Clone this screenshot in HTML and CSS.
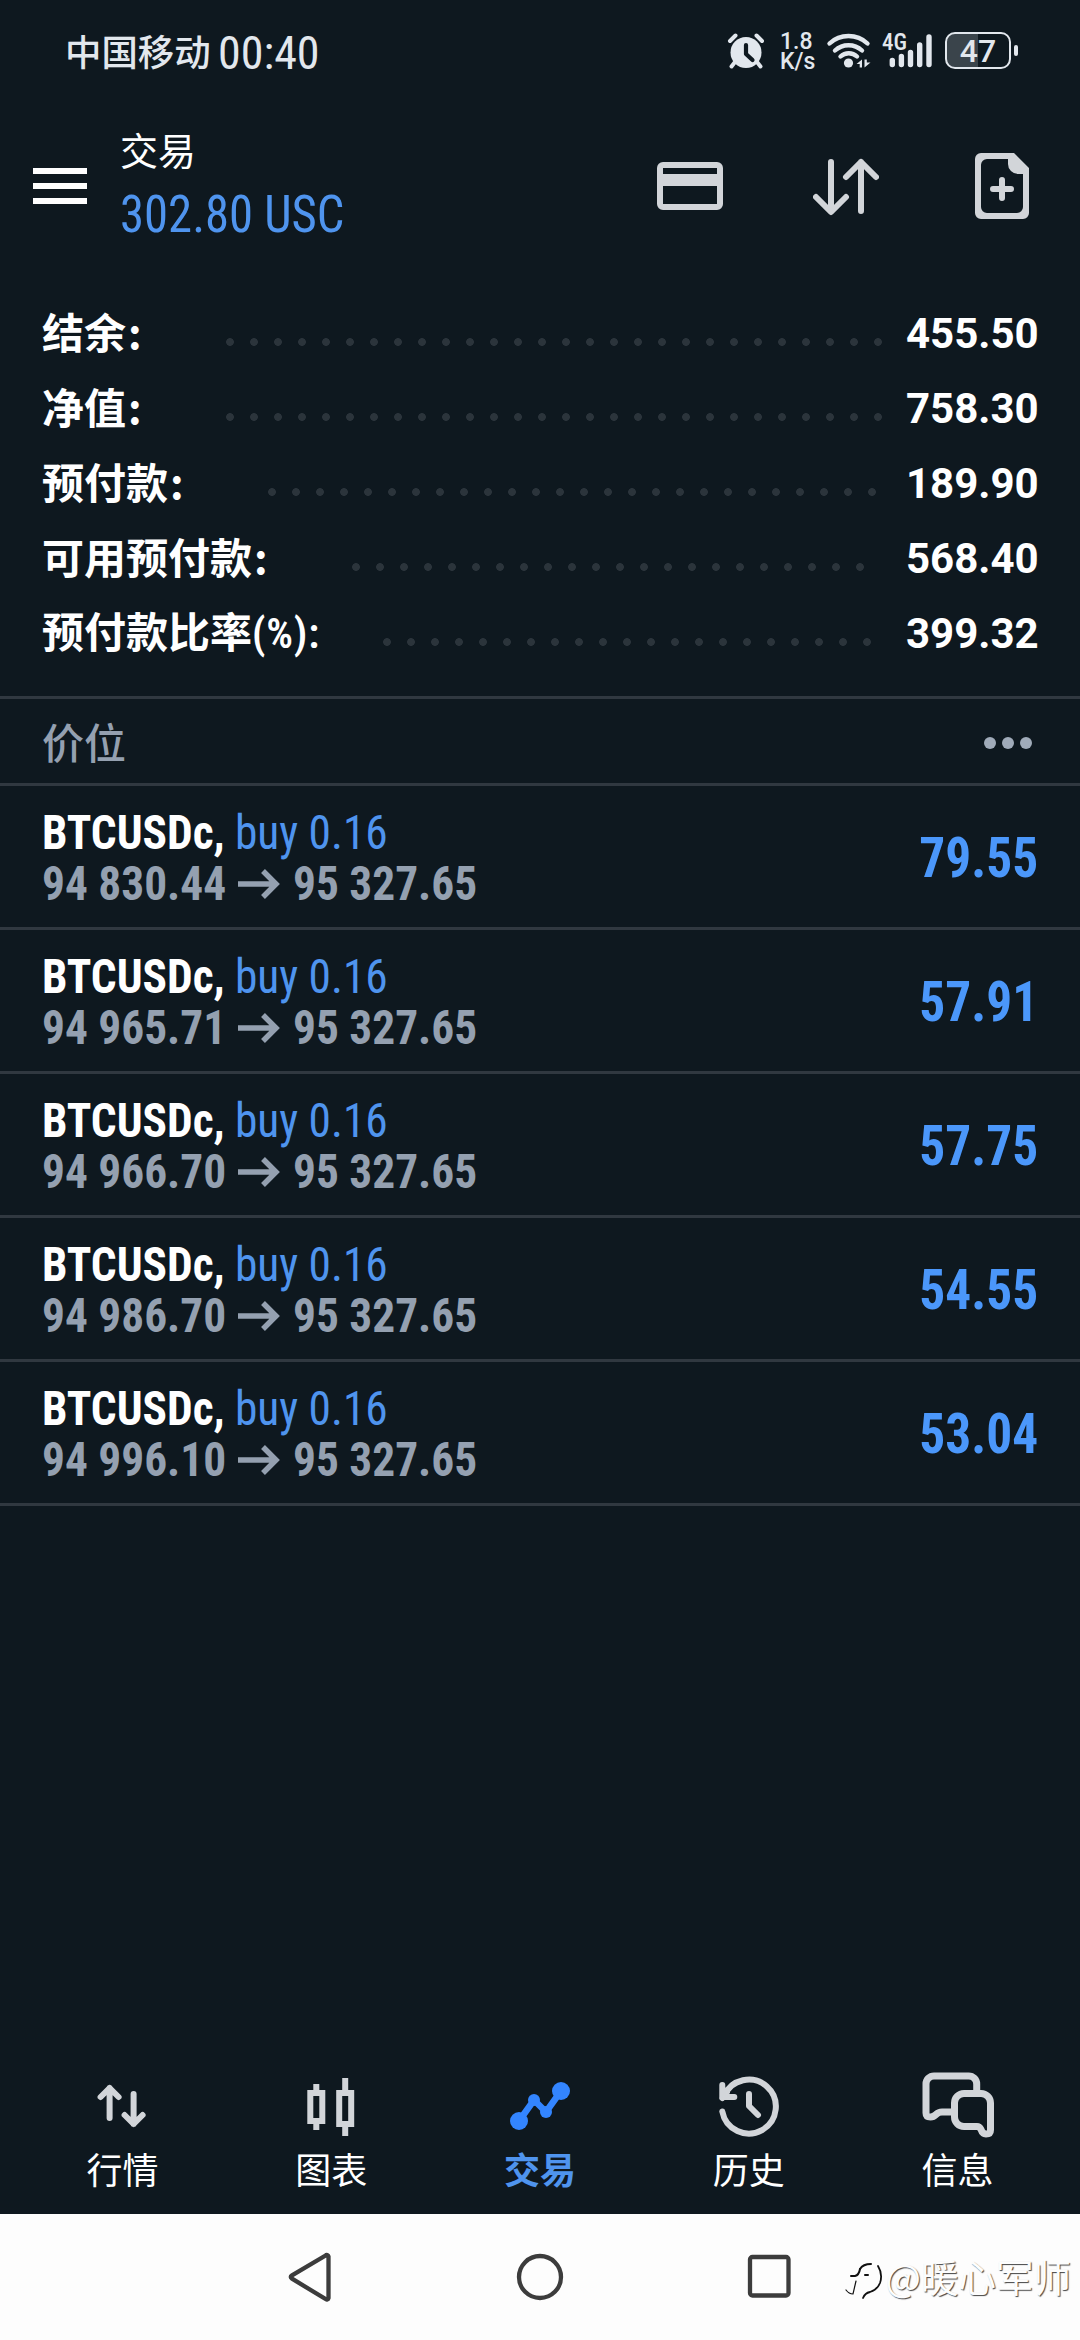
FILE: index.html
```html
<!DOCTYPE html>
<html lang="zh-CN">
<head>
<meta charset="utf-8">
<title>交易</title>
<link rel="stylesheet" href="styles.css">
</head>
<body>
<div class="screen">
  <header class="status">
    <span class="carrier">中国移动</span>
    <span class="clock">00:40</span>
    <div class="status-icons">
      <svg class="alarm" width="38" height="38" viewBox="0 0 38 38">
        <path d="M8 30l-3.500 4.500M30 30l3.500 4.500M3 9l5.500-5.500M35 9l-5.500-5.500" stroke="currentColor" stroke-width="4" stroke-linecap="round"/>
        <circle cx="19" cy="20.500" r="15.500" fill="currentColor"/>
        <path d="M19 13v9l6.500 6" fill="none" stroke="#0e181f" stroke-width="4.200" stroke-linecap="round" stroke-linejoin="round"/>
      </svg>
      <div class="speed"><span>1.8</span><span>K/s</span></div>
      <svg class="wifi" width="46" height="38" viewBox="0 0 46 38">
        <g fill="none" stroke="currentColor" stroke-width="4.400" stroke-linecap="round">
          <path d="M3.500 11.500a28 28 0 0 1 38 0"/>
          <path d="M9 18.500a20 20 0 0 1 27 0"/>
          <path d="M14.500 24.500a12 12 0 0 1 16.500 0"/>
        </g>
        <circle cx="22.500" cy="31" r="4.600" fill="currentColor"/>
        <path d="M30.500 32l5.500-4.500v8h-2.300v-3.500zM44.500 30.500L38.500 35.500v-8h2.300v3z" fill="currentColor"/>
      </svg>
      <div class="cell">
        <span class="gen">4G</span>
        <svg width="46" height="38" viewBox="0 0 46 38">
          <path d="M6.300 28.500v4M15.400 24.500v8M24.500 20.500v12M33.700 13v19.500M43 5v27.500" stroke="currentColor" stroke-width="5.400" stroke-linecap="round"/>
        </svg>
      </div>
      <div class="battery"><span>47</span></div>
      <i class="battery-tip"></i>
    </div>
  </header>

  <div class="topbar">
    <div class="menu"><i></i><i></i><i></i></div>
    <div class="title">
      <span class="title-name">交易</span>
      <span class="title-profit">302.80 USC</span>
    </div>
    <div class="actions">
      <svg width="66" height="66" viewBox="0 0 66 66">
        <rect x="3" y="12" width="60" height="42" rx="3" fill="none" stroke="currentColor" stroke-width="6"/>
        <path d="M3 27h60" stroke="currentColor" stroke-width="12"/>
      </svg>
      <svg width="66" height="66" viewBox="0 0 66 66" fill="none" stroke="currentColor" stroke-width="6" stroke-linecap="round" stroke-linejoin="round">
        <path d="M18 9v49M3 44l15 15 15-15M48 58V9M33 24L48 9l15 15"/>
      </svg>
      <svg width="54" height="66" viewBox="0 0 54 66">
        <path fill="currentColor" fill-rule="evenodd" d="M6 0H39L54 15V60a6 6 0 0 1-6 6H6a6 6 0 0 1-6-6V6a6 6 0 0 1 6-6zM12 6a6 6 0 0 0-6 6V54a6 6 0 0 0 6 6H42a6 6 0 0 0 6-6V21H43a10 10 0 0 1-10-10V6z"/>
        <path d="M18 36h18M27 27v18" stroke="currentColor" stroke-width="6" stroke-linecap="round"/>
      </svg>
    </div>
  </div>

  <section class="summary">
    <div class="sum-row"><span class="sum-label">结余<em>:</em></span><i class="leader" style="width:672px;margin-right:16px"></i><span class="sum-value">455.50</span></div>
    <div class="sum-row"><span class="sum-label">净值<em>:</em></span><i class="leader" style="width:672px;margin-right:16px"></i><span class="sum-value">758.30</span></div>
    <div class="sum-row"><span class="sum-label">预付款<em>:</em></span><i class="leader" style="width:624px;margin-right:22px"></i><span class="sum-value">189.90</span></div>
    <div class="sum-row"><span class="sum-label">可用预付款<em>:</em></span><i class="leader" style="width:528px;margin-right:34px"></i><span class="sum-value">568.40</span></div>
    <div class="sum-row"><span class="sum-label ratio">预付款比率<b>(%):</b></span><i class="leader" style="width:504px;margin-right:27px"></i><span class="sum-value">399.32</span></div>
  </section>

  <div class="section-head">
    <span>价位</span>
    <div class="more"><i></i><i></i><i></i></div>
  </div>

  <main class="positions">
    <article class="pos">
      <div class="pos-info">
        <div class="pos-line"><span class="sym">BTCUSDc,</span><span class="side">buy 0.16</span></div>
        <div class="pos-line price"><span>94 830.44</span><svg class="arrow" viewBox="0 0 42 30"><path d="M0 15h38M25 2l13 13-13 13"/></svg><span>95 327.65</span></div>
      </div>
      <span class="profit">79.55</span>
    </article>
    <article class="pos">
      <div class="pos-info">
        <div class="pos-line"><span class="sym">BTCUSDc,</span><span class="side">buy 0.16</span></div>
        <div class="pos-line price"><span>94 965.71</span><svg class="arrow" viewBox="0 0 42 30"><path d="M0 15h38M25 2l13 13-13 13"/></svg><span>95 327.65</span></div>
      </div>
      <span class="profit">57.91</span>
    </article>
    <article class="pos">
      <div class="pos-info">
        <div class="pos-line"><span class="sym">BTCUSDc,</span><span class="side">buy 0.16</span></div>
        <div class="pos-line price"><span>94 966.70</span><svg class="arrow" viewBox="0 0 42 30"><path d="M0 15h38M25 2l13 13-13 13"/></svg><span>95 327.65</span></div>
      </div>
      <span class="profit">57.75</span>
    </article>
    <article class="pos">
      <div class="pos-info">
        <div class="pos-line"><span class="sym">BTCUSDc,</span><span class="side">buy 0.16</span></div>
        <div class="pos-line price"><span>94 986.70</span><svg class="arrow" viewBox="0 0 42 30"><path d="M0 15h38M25 2l13 13-13 13"/></svg><span>95 327.65</span></div>
      </div>
      <span class="profit">54.55</span>
    </article>
    <article class="pos">
      <div class="pos-info">
        <div class="pos-line"><span class="sym">BTCUSDc,</span><span class="side">buy 0.16</span></div>
        <div class="pos-line price"><span>94 996.10</span><svg class="arrow" viewBox="0 0 42 30"><path d="M0 15h38M25 2l13 13-13 13"/></svg><span>95 327.65</span></div>
      </div>
      <span class="profit">53.04</span>
    </article>
  </main>

  <nav class="tabs">
    <a class="tab">
      <svg viewBox="0 0 72 72" fill="none" stroke="currentColor" stroke-width="6" stroke-linecap="round" stroke-linejoin="round">
        <path d="M23.600 48V18M14.600 27l9-9 9 9M47.600 24v30M38.600 45l9 9 9-9"/>
      </svg>
      <span>行情</span>
    </a>
    <a class="tab">
      <svg viewBox="0 0 72 72" fill="none" stroke="currentColor" stroke-width="6">
        <path d="M15.300 23h12v28h-12zM21.300 14v7M21.300 53v7M44.200 23h12v31h-12zM50.200 8v13M50.200 56v10"/>
      </svg>
      <span>图表</span>
    </a>
    <a class="tab active">
      <svg viewBox="0 0 72 72" fill="currentColor">
        <path d="M15 51L30 30 42 42 57 21" fill="none" stroke="currentColor" stroke-width="6.500"/>
        <circle cx="15" cy="51" r="9"/><circle cx="30" cy="30" r="6"/><circle cx="42" cy="42" r="6"/><circle cx="57" cy="21" r="9"/>
      </svg>
      <span>交易</span>
    </a>
    <a class="tab">
      <svg viewBox="0 0 72 72" fill="none" stroke="currentColor" stroke-width="6" stroke-linecap="round" stroke-linejoin="round">
        <path d="M9.300 41.500A27 27 0 1 0 11 26L9.300 28M9.300 15v12h12M14 22l-3 4M36 24v12l9 9"/>
      </svg>
      <span>历史</span>
    </a>
    <a class="tab">
      <svg viewBox="0 0 72 72" fill="none" stroke="currentColor" stroke-width="7" stroke-linejoin="round">
        <path d="M54.700 24V14a8 8 0 0 0-8-8H12a8 8 0 0 0-8 8V43q0 4 4.500 4 3 0 5.500-2.500 2.500-2.500 6-2.500H32"/>
        <path d="M42 23.500H59a9.500 9.500 0 0 1 9.500 9.500V60q0 4-4.500 4-3.500 0-5-4.500-1.500-3-4-3H42a9.500 9.500 0 0 1-9.500-9.500V33a9.500 9.500 0 0 1 9.500-9.500z"/>
      </svg>
      <span>信息</span>
    </a>
  </nav>

  <footer class="sysbar">
    <span class="key"><svg viewBox="0 0 50 50"><path d="M43.500 4.500a1.800 1.800 0 0 0-3-1L7 23.300q-2.500 1.700 0 3.400l33.500 20.300a1.800 1.800 0 0 0 3-1z"/></svg></span>
    <span class="key"><svg viewBox="0 0 50 50"><circle cx="25" cy="25" r="21"/></svg></span>
    <span class="key"><svg viewBox="0 0 50 50"><rect x="5" y="5" width="38.500" height="38.500" rx="2.500"/></svg></span>
    <div class="watermark">
      <svg width="38" height="40" viewBox="0 0 38 40" fill="none" stroke="#111" stroke-linecap="round">
        <path d="M15 7q3-5 11-5" stroke-width="2"/>
        <path d="M33 4q5 8 2 17-3 7-10 9-5 1-7 6" stroke-width="1.800"/>
        <path d="M6 14h4q4-1 5-7M20 13h3" stroke-width="2"/>
        <path d="M11 19L8 32Q4 32 1 28" stroke-width="1.200"/>
      </svg>
      <span>@暖心军师</span>
    </div>
  </footer>
</div>
</body>
</html>
```
FILE: styles.css
```css
* { box-sizing: border-box; }

body {
  margin: 0;
  background: #0e181f;
  color: #fff;
  font-family: Roboto, "Noto Sans CJK SC", sans-serif;
}

i { display: block; }
svg { display: block; flex: none; }

.screen {
  display: flex;
  flex-direction: column;
  width: 1080px;
  height: 2340px;
  overflow: hidden;
}

/* status bar */
.status {
  display: flex;
  height: 104px;
  padding: 32px 62px 0 65px;
  color: #e2e7ed;
}
.carrier {
  width: 153px;
  font: 500 36.4px/36px "Noto Sans CJK SC", sans-serif;
}
.clock {
  font-size: 46px;
  font-weight: 450;
  line-height: 42px;
  font-stretch: 84%;
}
.status-icons {
  display: flex;
  margin-left: auto;
}
.speed {
  display: flex;
  flex-direction: column;
  width: 34px;
  margin: 0 12px 0 15px;
  font-size: 23px;
  line-height: 20px;
  font-weight: 500;
  font-stretch: 90%;
}
.cell { position: relative; margin: 0 13px 0 14px; }
.gen {
  position: absolute;
  left: -4px;
  top: 1px;
  font-size: 23px;
  line-height: 20px;
  font-weight: 500;
  font-stretch: 75%;
}
.battery {
  display: flex;
  align-items: center;
  justify-content: center;
  width: 66px;
  height: 37px;
  border: 2px solid currentColor;
  border-radius: 10px;
  background: linear-gradient(90deg, #3a444b 50%, transparent 50%);
  font-size: 32px;
  font-weight: 500;
  font-stretch: 90%;
}
.battery-tip {
  width: 4px;
  height: 11px;
  margin: 13px 0 0 3px;
  border-radius: 2px;
  background: currentColor;
}

/* title bar */
.topbar {
  display: flex;
  height: 192px;
  padding: 0 51px 0 33px;
}
.menu {
  display: flex;
  flex-direction: column;
  gap: 9px;
  width: 54px;
  padding-top: 64px;
}
.menu i { height: 6px; background: #fff; }
.title {
  display: flex;
  flex-direction: column;
  margin-left: 33px;
  padding-top: 22px;
}
.title-name {
  font: 38px/46px "Noto Sans CJK SC", sans-serif;
}
.title-profit {
  margin-top: 13px;
  color: #4f94ee;
  font-size: 51px;
  line-height: 60px;
  font-stretch: 75%;
  transform: scaleX(0.955);
  transform-origin: left;
}
.actions {
  display: flex;
  gap: 90px;
  margin-left: auto;
  padding-top: 49px;
  color: #d2d5d9;
}
.actions svg:last-child { margin-left: 6px; }

/* account summary */
.summary {
  height: 403px;
  border-bottom: 3px solid #303840;
}
.sum-row {
  display: flex;
  align-items: center;
  height: 75px;
  padding: 0 42px;
  font-weight: 700;
}
.sum-label {
  margin-top: -5px;
  font: 700 42px/60px "Noto Sans CJK SC", sans-serif;
}
.sum-label em {
  margin-left: 2px;
  font-style: normal;
}
.sum-label.ratio { margin-top: -3px; }
.sum-label b {
  font-family: Roboto, sans-serif;
  font-weight: 600;
  font-stretch: 87%;
  letter-spacing: 0.8px;
}
.leader {
  flex: none;
  height: 8px;
  margin-top: 16px;
  margin-left: auto;
  background: radial-gradient(circle at 12px 4px, #2b343b 3.500px, transparent 4.200px) 0 0 / 24px 8px repeat-x;
}
.sum-value {
  width: 132px;
  font-size: 42px;
  text-align: right;
  white-space: nowrap;
}

/* section header */
.section-head {
  display: flex;
  align-items: center;
  justify-content: space-between;
  height: 87px;
  padding: 0 48px 0 42px;
  border-bottom: 3px solid #303840;
  color: #94a0b0;
  font: 500 42px/60px "Noto Sans CJK SC", sans-serif;
}
.more { display: flex; gap: 6px; padding-top: 4px; }
.more i {
  width: 12px;
  height: 12px;
  border-radius: 50%;
  background: #a0abb9;
}

/* open positions */
.positions { flex: 1; }
.pos {
  display: flex;
  justify-content: space-between;
  height: 144px;
  padding: 0 42px;
  border-bottom: 3px solid #303840;
}
.pos-info { padding-top: 21px; }
.pos-line {
  display: flex;
  align-items: center;
  height: 51px;
  font-size: 48px;
  font-stretch: 75%;
  line-height: 51px;
  white-space: nowrap;
}
.pos-line span {
  transform: scaleX(0.945);
  transform-origin: left;
}
.sym { width: 193px; font-weight: 700; }
.side { color: #4f94ee; }
.price { color: #94a0b0; font-weight: 700; }
.price span:first-child { width: 196px; }
.arrow {
  width: 42px;
  height: 30px;
  margin-right: 13px;
  fill: none;
  stroke: currentColor;
  stroke-width: 5.5;
}
.profit {
  padding-top: 39px;
  color: #4b97fa;
  font-size: 55px;
  font-weight: 700;
  font-stretch: 75%;
  line-height: 66px;
  transform: scaleX(0.935);
  transform-origin: right;
}

/* tab bar */
.tabs {
  display: flex;
  height: 144px;
  padding: 0 18px;
}
.tab {
  display: flex;
  flex: 1;
  flex-direction: column;
  align-items: center;
  color: #d2d5d9;
}
.tab svg { width: 72px; height: 72px; }
.tab span {
  margin-top: -1px;
  color: #fff;
  font: 36px/54px "Noto Sans CJK SC", sans-serif;
}
.tab.active { color: #3385ff; }
.tab.active span { color: #4f94ee; font-weight: 700; }

/* system navigation */
.sysbar {
  position: relative;
  display: flex;
  justify-content: center;
  align-items: center;
  height: 126px;
  background: #fdfdfd;
}
.key { display: flex; justify-content: center; width: 230px; }
.key svg {
  width: 50px;
  height: 50px;
  fill: none;
  stroke: #3c3c3c;
  stroke-width: 4.300;
}
.watermark {
  position: absolute;
  right: 9px;
  bottom: 38px;
  display: flex;
  align-items: center;
  gap: 3px;
  color: #fdfdfd;
  font: 37.500px/46px "Noto Sans CJK SC", sans-serif;
  text-shadow: 1px 1px 1px #444;
}
.watermark span { margin-top: -12px; }
```
